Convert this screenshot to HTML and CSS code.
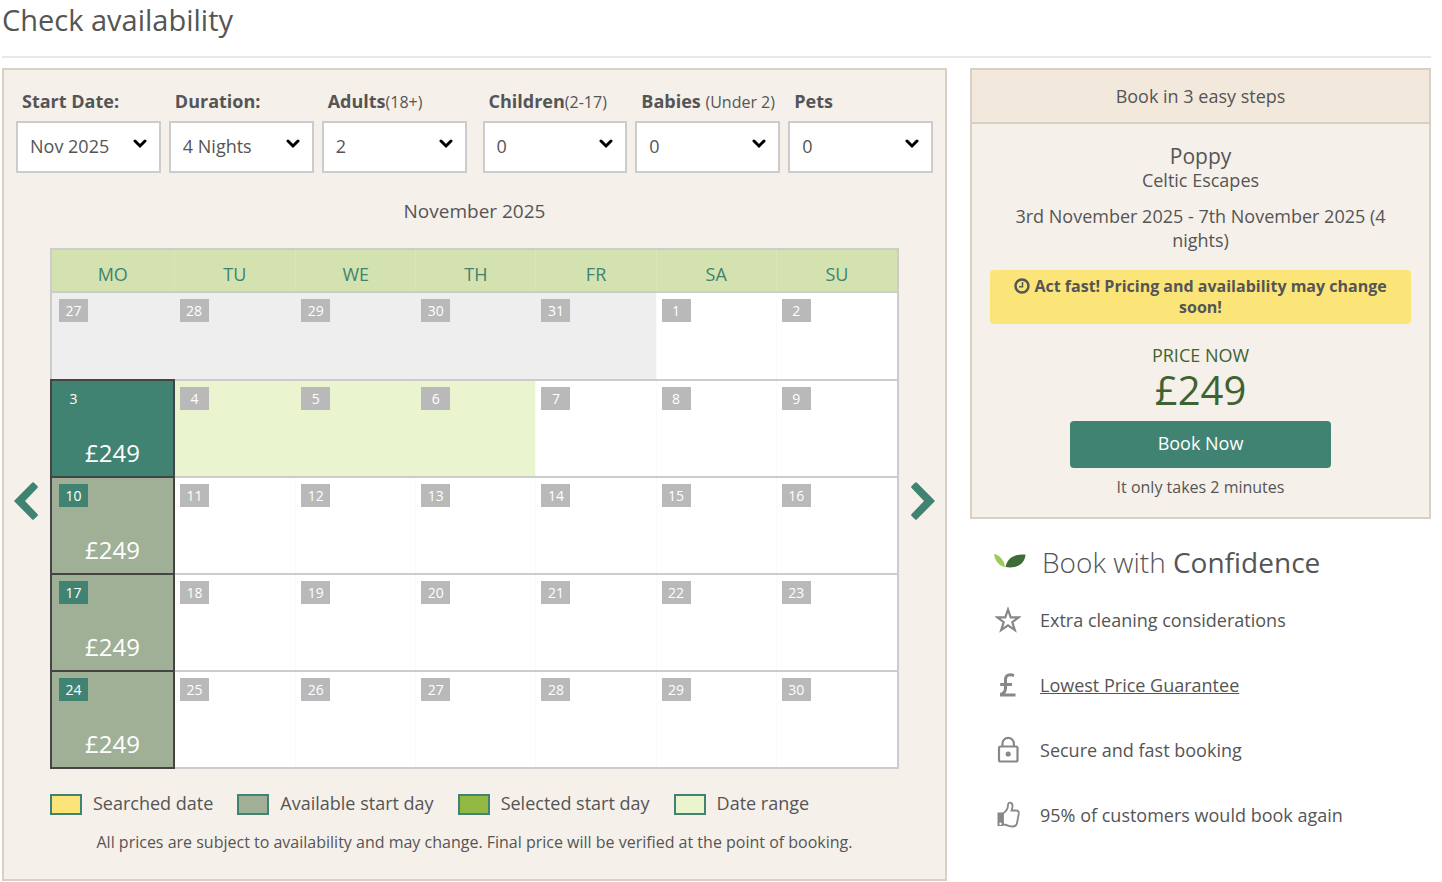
FILE: index.html
```
<!DOCTYPE html>
<html lang="en">
<head>
    <meta charset="UTF-8">
    <meta name="viewport" content="width=device-width, initial-scale=1.0">
    <title>Check availability</title>
    <link rel="stylesheet" href="styles.css">
</head>
<body>
    <h1>Check availability</h1>

    <div class="columns">
        <main class="panel">
            <form class="filters">
                <div class="filter-group">
                    <div class="field">
                        <label for="start">Start Date:</label>
                        <div class="select">
                            <select id="start"><option>Nov 2025</option><option>Dec 2025</option></select>
                            <svg viewBox="0 0 14 10"><path d="M2 2l5 5 5-5"/></svg>
                        </div>
                    </div>
                    <div class="field">
                        <label for="duration">Duration:</label>
                        <div class="select">
                            <select id="duration"><option>4 Nights</option><option>7 Nights</option></select>
                            <svg viewBox="0 0 14 10"><path d="M2 2l5 5 5-5"/></svg>
                        </div>
                    </div>
                    <div class="field">
                        <label for="adults">Adults<small>(18+)</small></label>
                        <div class="select">
                            <select id="adults"><option>2</option><option>3</option></select>
                            <svg viewBox="0 0 14 10"><path d="M2 2l5 5 5-5"/></svg>
                        </div>
                    </div>
                </div>
                <div class="filter-group">
                    <div class="field">
                        <label for="children">Children<small>(2-17)</small></label>
                        <div class="select">
                            <select id="children"><option>0</option><option>1</option></select>
                            <svg viewBox="0 0 14 10"><path d="M2 2l5 5 5-5"/></svg>
                        </div>
                    </div>
                    <div class="field">
                        <label for="babies">Babies <small>(Under 2)</small></label>
                        <div class="select">
                            <select id="babies"><option>0</option><option>1</option></select>
                            <svg viewBox="0 0 14 10"><path d="M2 2l5 5 5-5"/></svg>
                        </div>
                    </div>
                    <div class="field">
                        <label for="pets">Pets</label>
                        <div class="select">
                            <select id="pets"><option>0</option><option>1</option></select>
                            <svg viewBox="0 0 14 10"><path d="M2 2l5 5 5-5"/></svg>
                        </div>
                    </div>
                </div>
            </form>

            <h2 class="month">November 2025</h2>

            <div class="calendar">
                <button class="arrow" type="button" aria-label="Previous month">
                    <svg viewBox="0 0 24 38"><path d="M0 19L18 0.7q1-1 2 0L23.400 4q1 1 0 2L11 19l12.400 13q1 1 0 2L20 37.300q-1 1-2 0z"/></svg>
                </button>
                <table>
                    <thead>
                        <tr><th>MO</th><th>TU</th><th>WE</th><th>TH</th><th>FR</th><th>SA</th><th>SU</th></tr>
                    </thead>
                    <tbody>
                        <tr class="short">
                            <td class="past"><span class="day">27</span></td>
                            <td class="past"><span class="day">28</span></td>
                            <td class="past"><span class="day">29</span></td>
                            <td class="past"><span class="day">30</span></td>
                            <td class="past"><span class="day">31</span></td>
                            <td><span class="day">1</span></td>
                            <td><span class="day">2</span></td>
                        </tr>
                        <tr>
                            <td class="available selected"><button type="button"><span class="day">3</span><span class="price">£249</span></button></td>
                            <td class="range"><span class="day">4</span></td>
                            <td class="range"><span class="day">5</span></td>
                            <td class="range"><span class="day">6</span></td>
                            <td><span class="day">7</span></td>
                            <td><span class="day">8</span></td>
                            <td><span class="day">9</span></td>
                        </tr>
                        <tr>
                            <td class="available"><button type="button"><span class="day">10</span><span class="price">£249</span></button></td>
                            <td><span class="day">11</span></td>
                            <td><span class="day">12</span></td>
                            <td><span class="day">13</span></td>
                            <td><span class="day">14</span></td>
                            <td><span class="day">15</span></td>
                            <td><span class="day">16</span></td>
                        </tr>
                        <tr>
                            <td class="available"><button type="button"><span class="day">17</span><span class="price">£249</span></button></td>
                            <td><span class="day">18</span></td>
                            <td><span class="day">19</span></td>
                            <td><span class="day">20</span></td>
                            <td><span class="day">21</span></td>
                            <td><span class="day">22</span></td>
                            <td><span class="day">23</span></td>
                        </tr>
                        <tr>
                            <td class="available"><button type="button"><span class="day">24</span><span class="price">£249</span></button></td>
                            <td><span class="day">25</span></td>
                            <td><span class="day">26</span></td>
                            <td><span class="day">27</span></td>
                            <td><span class="day">28</span></td>
                            <td><span class="day">29</span></td>
                            <td><span class="day">30</span></td>
                        </tr>
                    </tbody>
                </table>
                <button class="arrow" type="button" aria-label="Next month">
                    <svg viewBox="0 0 24 38"><path d="M24 19L6 0.7q-1-1-2 0L0.600 4q-1 1 0 2L13 19L0.600 32q-1 1 0 2L4 37.300q1 1 2 0z"/></svg>
                </button>
            </div>

            <ul class="legend">
                <li><span class="swatch searched"></span>Searched date</li>
                <li><span class="swatch start"></span>Available start day</li>
                <li><span class="swatch chosen"></span>Selected start day</li>
                <li><span class="swatch dates"></span>Date range</li>
            </ul>
            <p class="note">All prices are subject to availability and may change. Final price will be verified at the point of booking.</p>
        </main>

        <aside>
            <section class="booking">
                <h2>Book in 3 easy steps</h2>
                <div class="booking-body">
                    <h3>Poppy</h3>
                    <p>Celtic Escapes</p>
                    <p class="stay">3rd November 2025 - 7th November 2025 (4 nights)</p>
                    <p class="alert">
                        <svg viewBox="0 0 16 16"><circle cx="8" cy="8" r="6.500"/><path d="M8.500 4v4.700H5"/></svg>
                        Act fast! Pricing and availability may change soon!
                    </p>
                    <p class="price-label">PRICE NOW</p>
                    <p class="price-now">£249</p>
                    <button class="book" type="button">Book Now</button>
                    <p class="hint">It only takes 2 minutes</p>
                </div>
            </section>

            <section class="confidence">
                <h2>
                    <svg class="leaf" viewBox="0 0 32 14">
                        <path fill="#9ccb5a" d="M0 0c5 1 10 5 11 13C5 12 1 7 0 0z"/>
                        <path fill="#3f6b38" d="M11.500 13C13 5 20-0.500 31.500 0.500C31 9 24 15 11.500 13z"/>
                    </svg>
                    <span>Book with <strong>Confidence</strong></span>
                </h2>
                <ul>
                    <li>
                        <svg viewBox="0 0 26 28"><path d="M13 3.500l2.700 7.800h8l-6.400 4.800 2.500 8L13 19.300l-6.800 4.800 2.500-8-6.400-4.800h8z"/></svg>
                        Extra cleaning considerations
                    </li>
                    <li>
                        <svg class="pound" viewBox="0 0 26 28"><path d="M19 4.600C14.500 2.800 10.500 4 10.500 8.500V17c0 3-1.500 5.500-5 6.500M5.200 13.500H17M5 24h15.500"/></svg>
                        <a href="#">Lowest Price Guarantee</a>
                    </li>
                    <li>
                        <svg viewBox="0 0 26 28"><rect x="4" y="10.500" width="18.500" height="15" rx="1.500"/><path d="M7.500 10.500V7.500a5.700 5.700 0 0 1 11.400 0V10.500"/><circle class="solid" cx="13.200" cy="18" r="2.600"/></svg>
                        Secure and fast booking
                    </li>
                    <li>
                        <svg class="thumb" viewBox="0 0 26 28"><path class="solid" fill-rule="evenodd" d="M2.500 11.500H8V25H2.500zM5.500 21.500a1.200 1.200 0 1 0 0 2.400a1.200 1.200 0 0 0 0-2.400z"/><path d="M8 23.500V12.500C10.500 11 13 8 13 4c0-3.500 4.500-3 4.500 1c0 2-0.800 3.500-1 4.500h4.500c2.500 0 3 1.500 2.700 3.500L22 22c-0.500 2.500-2 3.500-4.500 3.500c-4 0-5-2-9.500-2"/></svg>
                        95% of customers would book again
                    </li>
                </ul>
            </section>
        </aside>
    </div>
</body>
</html>
```
FILE: styles.css
```
* {
    box-sizing: border-box;
}
body {
    margin: 0;
    padding: 0 11px 0 2px;
    font-family: "Open Sans", Arial, sans-serif;
    font-size: 18px;
    line-height: 24px;
    color: #555;
    background: #fff;
}
h1, h2, h3, p, ul {
    margin: 0;
    padding: 0;
    font-weight: normal;
}
ul {
    list-style: none;
}
button, select {
    font: inherit;
    color: inherit;
}
button {
    border: 0;
    padding: 0;
    background: none;
    cursor: pointer;
}
h1 {
    font-size: 29px;
    line-height: 40px;
    padding-bottom: 16px;
    border-bottom: 2px solid #e8e8e8;
    margin-bottom: 10px;
}
.columns {
    display: grid;
    grid-template-columns: minmax(0, 41fr) minmax(0, 20fr);
    gap: 23px;
    align-items: start;
}
.panel {
    border: 2px solid #d9d0c5;
    background: #f5f0ea;
    padding-bottom: 25px;
}

/* filters */
.filters {
    display: flex;
    gap: 16px;
    padding: 19px 12px 0;
}
.filter-group {
    flex: 1;
    display: grid;
    grid-template-columns: repeat(3, minmax(0, 1fr));
    gap: 8px;
}
.field label {
    display: block;
    font-weight: bold;
    padding-left: 6px;
    margin-bottom: 8px;
    white-space: nowrap;
}
.field small {
    font-size: 16px;
    line-height: 16px;
    font-weight: normal;
}
.select {
    position: relative;
}
.select select {
    appearance: none;
    display: block;
    width: 100%;
    height: 52px;
    padding: 0 12px 2px;
    border: 2px solid #ccc;
    border-radius: 0;
    background: #fff;
}
.select svg {
    position: absolute;
    top: 18px;
    right: 14px;
    width: 14px;
    height: 10px;
    fill: none;
    stroke: #000;
    stroke-width: 3;
    stroke-linecap: round;
    pointer-events: none;
}

/* calendar */
.month {
    font-size: 19px;
    text-align: center;
    padding: 26px 0 25px;
}
.calendar {
    display: flex;
    align-items: center;
    gap: 12px;
    padding: 0 10px;
}
.arrow {
    flex: none;
    width: 24px;
    margin-bottom: 16px;
}
.arrow svg {
    display: block;
    width: 24px;
    height: 38px;
    fill: #418372;
}
table {
    flex: 1;
    border-collapse: collapse;
    table-layout: fixed;
    border: 2px solid #ccc;
    background: #fff;
}
th {
    height: 43px;
    padding: 6px 0 0;
    font-weight: normal;
    color: #418372;
    background: #d3e2ae;
    border-left: 1px solid #d9e6b8;
}
th:first-child {
    width: 123px;
}
tbody tr {
    border-top: 2px solid #ccc;
}
td {
    height: 97px;
    padding: 6px 5px 0;
    vertical-align: top;
    border-left: 1px solid #fafafa;
}
.short td {
    height: 88px;
}
td:first-child {
    padding-left: 7px;
}
.past {
    background: #eee;
    border-color: #eee;
}
.range {
    background: #eaf5d0;
    border-color: #e9f3d2;
}
.day {
    display: block;
    width: 29px;
    font-size: 14px;
    line-height: 23px;
    text-align: center;
    color: #fff;
    background: #b9b9b9;
}
.available {
    border: 2px solid #444;
    background: #9fb097;
}
.available button {
    display: block;
    width: 100%;
    text-align: left;
}
.available .day {
    background: #418372;
}
.selected {
    background: #418372;
}
.price {
    display: block;
    margin: 27px 2px 0 0;
    font-size: 24px;
    line-height: 32px;
    text-align: center;
    color: #fff;
}

.legend {
    display: flex;
    flex-wrap: wrap;
    gap: 8px 24px;
    padding: 22px 46px 0;
}
.legend li {
    display: flex;
    gap: 11px;
}
.swatch {
    width: 32px;
    height: 21px;
    margin-top: 3px;
    border: 2px solid #418372;
}
.searched {
    background: #fbe579;
}
.start {
    background: #9fb097;
}
.chosen {
    background: #92b742;
}
.dates {
    background: #eaf5d0;
}
.note {
    margin-top: 15px;
    font-size: 16px;
    text-align: center;
}

/* booking box */
.booking {
    border: 2px solid #d9d0c5;
    background: #f5f0ea;
    text-align: center;
}
.booking h2 {
    font-size: 18px;
    padding: 14px 0;
    background: #f3e8dc;
    border-bottom: 2px solid #d9d0c5;
}
.booking-body {
    padding: 20px 18px 18px;
}
.booking h3 {
    font-size: 21px;
}
.stay {
    margin: 12px 0 18px;
    padding: 0 16px;
}
.alert {
    padding: 6px 8px;
    border-radius: 4px;
    background: #fbe579;
    font-size: 16px;
    line-height: 21px;
    font-weight: bold;
}
.alert svg {
    width: 16px;
    height: 16px;
    vertical-align: -2px;
    fill: none;
    stroke: #555;
    stroke-width: 2.500;
}
.alert path {
    stroke-width: 1.500;
}
.price-label {
    margin-top: 19px;
    color: #3f6330;
}
.price-now {
    font-size: 40px;
    line-height: 46px;
    color: #3f6330;
}
.book {
    width: 57%;
    min-width: 261px;
    height: 47px;
    margin: 8px 0 7px;
    padding-bottom: 3px;
    border-radius: 4px;
    color: #fff;
    background: #418372;
}
.hint {
    font-size: 16px;
}

.confidence {
    padding: 23px 24px 0;
}
.confidence h2 {
    display: flex;
    gap: 16px;
    font-size: 28px;
    line-height: 40px;
    font-weight: 300;
    margin-bottom: 5px;
}
.confidence strong {
    font-weight: normal;
}
.leaf {
    width: 32px;
    height: 14px;
    margin-top: 12px;
}
.confidence li {
    display: flex;
    align-items: center;
    gap: 19px;
    height: 65px;
}
.confidence li svg {
    width: 26px;
    height: 28px;
    margin-left: 1px;
    fill: none;
    stroke: #888;
    stroke-width: 2.200;
}
.confidence li .pound {
    stroke-width: 3;
}
.confidence li .thumb {
    stroke-width: 1.800;
}
.confidence li .solid {
    fill: #888;
    stroke: none;
}
.confidence a {
    color: inherit;
}
```
